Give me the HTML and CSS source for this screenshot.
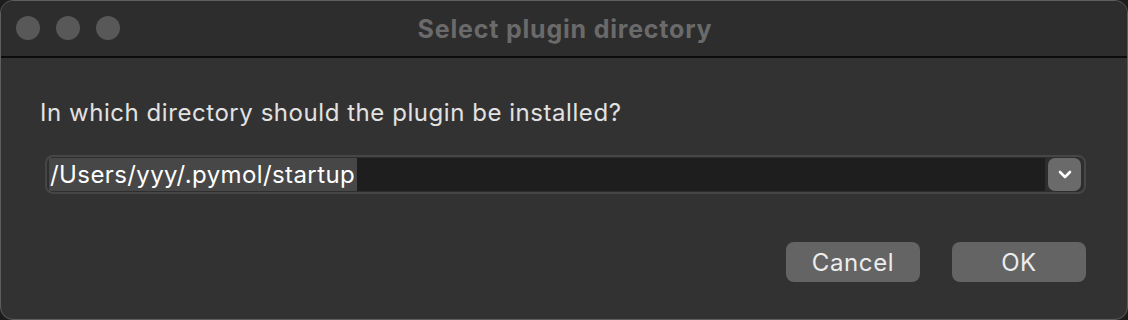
FILE: index.html
```html
<!DOCTYPE html>
<html>
<head>
<meta charset="utf-8">
<link rel="stylesheet" href="styles.css">
</head>
<body>
<div class="window">
  <div class="titlebar">
    <div class="lights">
      <span class="light"></span>
      <span class="light"></span>
      <span class="light"></span>
    </div>
    <div class="title">Select plugin directory</div>
  </div>
  <div class="content">
    <div class="label">In which directory should the plugin be installed?</div>
    <div class="combo">
      <div class="field"><span class="sel">/Users/yyy/.pymol/startup</span></div>
      <div class="drop">
        <svg width="14" height="9" viewBox="0 0 14 9"><path d="M2 2 L7 7 L12 2" fill="none" stroke="#ffffff" stroke-width="2.6" stroke-linecap="round" stroke-linejoin="round"/></svg>
      </div>
    </div>
    <div class="buttons">
      <div class="btn">Cancel</div>
      <div class="btn">OK</div>
    </div>
  </div>
</div>
</body>
</html>
```
FILE: styles.css
```css
html, body {
  margin: 0;
  padding: 0;
  background: #1c1c1c;
}
body {
  width: 1128px;
  height: 320px;
  font-family: Inter, "Liberation Sans", Arial, sans-serif;
}
.window {
  box-sizing: border-box;
  width: 1128px;
  height: 320px;
  border: 1px solid #5e5e5e;
  border-radius: 13px;
  background: #323232;
  overflow: hidden;
  display: flex;
  flex-direction: column;
}
.titlebar {
  height: 55px;
  background: #2d2d2d;
  border-bottom: 2px solid #0c0c0c;
  position: relative;
  display: flex;
  align-items: center;
  justify-content: center;
  flex-shrink: 0;
}
.lights {
  position: absolute;
  left: 15px;
  top: 15px;
  display: flex;
  gap: 16px;
}
.light {
  width: 24px;
  height: 24px;
  border-radius: 50%;
  background: #585858;
}
.title {
  font-weight: bold;
  font-size: 25px;
  letter-spacing: 0.8px;
  color: #6a6a6a;
  margin-left: 2px;
}
.content {
  padding: 0 41px 0 39px;
  flex: 1;
  display: flex;
  flex-direction: column;
}
.label {
  margin-top: 40px;
  font-size: 24px;
  letter-spacing: 0.55px;
  color: #e2e2e2;
  line-height: 30px;
}
.combo {
  margin-top: 27px;
  margin-left: 5px;
  height: 39px;
  box-sizing: border-box;
  border: 2px solid #464646;
  border-radius: 8px;
  background: #2e2e2e;
  display: flex;
  align-items: center;
  padding: 0 3px 0 2px;
}
.field {
  flex: 1;
  height: 33px;
  background: #1e1e1e;
  display: flex;
  align-items: stretch;
}
.sel {
  background: #474747;
  color: #ffffff;
  font-size: 24px;
  letter-spacing: 0.4px;
  line-height: 33px;
  padding: 0 2px 0 1px;
}
.drop {
  width: 33px;
  height: 33px;
  margin-left: 3px;
  border-radius: 7px;
  background: #6a6a6a;
  display: flex;
  align-items: center;
  justify-content: center;
}
.buttons {
  margin-top: 48px;
  display: flex;
  justify-content: flex-end;
  gap: 32px;
}
.btn {
  width: 134px;
  height: 40px;
  box-sizing: border-box;
  border-radius: 8px;
  background: #646464;
  color: #ececec;
  font-size: 24px;
  letter-spacing: 0.6px;
  display: flex;
  align-items: center;
  justify-content: center;
}
```
